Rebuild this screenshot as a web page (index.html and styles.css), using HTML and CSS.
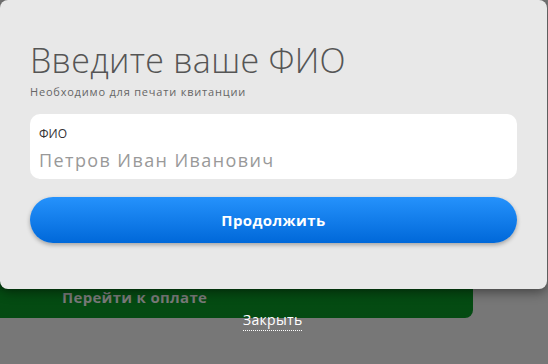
FILE: index.html
```html
<!DOCTYPE html>
<html lang="ru">
<head>
    <meta charset="UTF-8">
    <meta name="viewport" content="width=device-width, initial-scale=1.0">
    <title>Введите ваше ФИО</title>
    <link rel="stylesheet" href="styles.css">
</head>
<body>
    <div class="page">
        <button class="pay-button">Перейти к оплате</button>
    </div>

    <div class="modal">
        <h1 class="modal-title">Введите ваше ФИО</h1>
        <p class="modal-subtitle">Необходимо для печати квитанции</p>

        <label class="field">
            <span class="field-label">ФИО</span>
            <input type="text" class="field-input" placeholder="Петров Иван Иванович">
        </label>

        <button class="continue-button">Продолжить</button>
    </div>

    <a href="#" class="close-link">Закрыть</a>
</body>
</html>
```

FILE: styles.css
```css
html, body {
    height: 100%;
}
body {
    margin: 0;
    background-color: #777777;
    font-family: 'Open Sans', 'Noto Sans', sans-serif;
    overflow: hidden;
}
.page {
    padding-top: 276px;
}
.pay-button {
    display: block;
    width: 483px;
    height: 42px;
    margin-left: -10px;
    border: none;
    border-radius: 8px;
    background: linear-gradient(#02380d, #044c12 40%, #044a12);
    color: #7a7a7a;
    font-family: inherit;
    font-size: 15px;
    font-weight: 700;
    letter-spacing: 0.3px;
    text-align: left;
    padding: 0 0 0 72px;
}
.modal {
    position: absolute;
    top: 0;
    left: 0;
    width: 547px;
    height: 289px;
    box-sizing: border-box;
    padding: 36px 30px 0;
    background-color: #e8e8e8;
    border-radius: 8px;
    box-shadow: 0 3px 12px rgba(0, 0, 0, 0.45);
}
.modal-title {
    margin: 0;
    font-size: 34px;
    font-weight: 300;
    line-height: 48px;
    color: #555;
    letter-spacing: 0.3px;
}
.modal-subtitle {
    margin: 0 0 14px;
    font-size: 11px;
    line-height: 16px;
    letter-spacing: 0.8px;
    color: #666;
}
.field {
    display: flex;
    flex-direction: column;
    height: 65px;
    box-sizing: border-box;
    padding: 11px 9px 0;
    background-color: #fff;
    border-radius: 10px;
}
.field-label {
    font-size: 12px;
    line-height: 18px;
    color: #333;
}
.field-input {
    border: none;
    outline: none;
    padding: 0;
    margin-top: 5px;
    background: transparent;
    font-family: inherit;
    font-size: 18px;
    line-height: 24px;
    letter-spacing: 1.4px;
    color: #333;
}
.field-input::placeholder {
    color: #999;
}
.continue-button {
    display: block;
    width: 100%;
    height: 46px;
    margin-top: 18px;
    border: none;
    border-radius: 23px;
    background: linear-gradient(#2592fc, #0068d9);
    box-shadow: 0 2px 4px rgba(0, 0, 0, 0.3);
    color: #fff;
    font-family: inherit;
    font-size: 15px;
    font-weight: 700;
    letter-spacing: 0.4px;
    cursor: pointer;
}
.close-link {
    position: absolute;
    top: 310px;
    left: 243px;
    color: #fff;
    font-size: 14px;
    line-height: 20px;
    letter-spacing: 0.3px;
    text-decoration: none;
    border-bottom: 1px dotted #fff;
}
```
